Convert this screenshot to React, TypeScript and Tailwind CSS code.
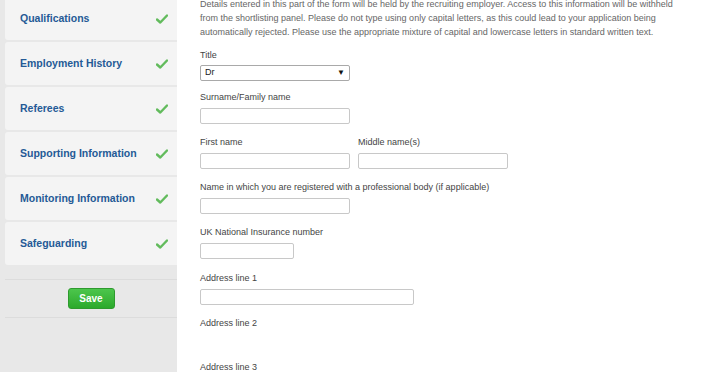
import React from "react";

const items = [
  "Qualifications",
  "Employment History",
  "Referees",
  "Supporting Information",
  "Monitoring Information",
  "Safeguarding",
];

function Check() {
  return (
    <svg width="12" height="10" viewBox="0 0 12 10" className="shrink-0">
      <path d="M1 5.5 L4.3 8.5 L11 1.5" fill="none" stroke="#62bb5c" strokeWidth="2.4" strokeLinecap="round" strokeLinejoin="round" />
    </svg>
  );
}

function Field({ label, width, className = "", hidden = false }: { label: string; width: number; className?: string; hidden?: boolean }) {
  return (
    <div className={className}>
      <div className="h-[14px] leading-[14px] text-[9px] text-[#444]">{label}</div>
      <div
        className={`mt-[4px] h-[16px] rounded-[2px] border ${hidden ? "border-transparent" : "border-[#c8c8c8]"} bg-white`}
        style={{ width }}
      />
    </div>
  );
}

export default function App() {
  return (
    <div className="flex h-[372px] w-[708px] overflow-hidden bg-white" style={{ fontFamily: '"Liberation Sans", Arial, sans-serif' }}>
      <div className="flex w-[177px] shrink-0 flex-col bg-[#e8e8e8] pl-[5px]">
        <div className="mt-[-3px] flex flex-col gap-[2px]">
          {items.map((t) => (
            <div key={t} className="flex h-[43px] items-center justify-between rounded-l-[3px] bg-[#f4f4f4] pl-[15px] pr-[9px]">
              <span className="text-[10.5px] font-bold text-[#245a96]">{t}</span>
              <Check />
            </div>
          ))}
        </div>
        <div className="mt-[14px] border-t border-[#dcdcdc]" />
        <div className="flex h-[37px] items-center justify-center">
          <button className="h-[21px] w-[47px] rounded-[3px] border border-[#2e9a2e] bg-gradient-to-b from-[#4cc64c] to-[#2ba92b] text-[10px] font-bold text-white">
            Save
          </button>
        </div>
        <div className="border-t border-[#dcdcdc]" />
      </div>
      <div className="flex-1 pl-[23px]">
        <p className="mt-[-3px] whitespace-nowrap text-[9px] leading-[14px] text-[#666]">
          Details entered in this part of the form will be held by the recruiting employer. Access to this information will be withheld
          <br />
          from the shortlisting panel. Please do not type using only capital letters, as this could lead to your application being
          <br />
          automatically rejected. Please use the appropriate mixture of capital and lowercase letters in standard written text.
        </p>
        <div className="mt-[9px]">
          <div className="h-[14px] leading-[14px] text-[9px] text-[#444]">Title</div>
          <div className="mt-[3px] flex h-[16px] w-[150px] items-center justify-between rounded-[2px] border border-[#a9a9a9] bg-white pl-[4px] pr-[4px]">
            <span className="text-[9px] text-[#222]">Dr</span>
            <span className="text-[8px] text-[#111]">▼</span>
          </div>
        </div>
        <Field label="Surname/Family name" width={150} className="mt-[9px]" />
        <div className="mt-[11px] flex gap-[8px]">
          <Field label="First name" width={150} />
          <Field label="Middle name(s)" width={150} />
        </div>
        <Field label="Name in which you are registered with a professional body (if applicable)" width={150} className="mt-[11px]" />
        <Field label="UK National Insurance number" width={94} className="mt-[11px]" />
        <Field label="Address line 1" width={214} className="mt-[12px]" />
        <Field label="Address line 2" width={214} className="mt-[11px]" hidden />
        <Field label="Address line 3" width={214} className="mt-[10px]" hidden />
      </div>
    </div>
  );
}
